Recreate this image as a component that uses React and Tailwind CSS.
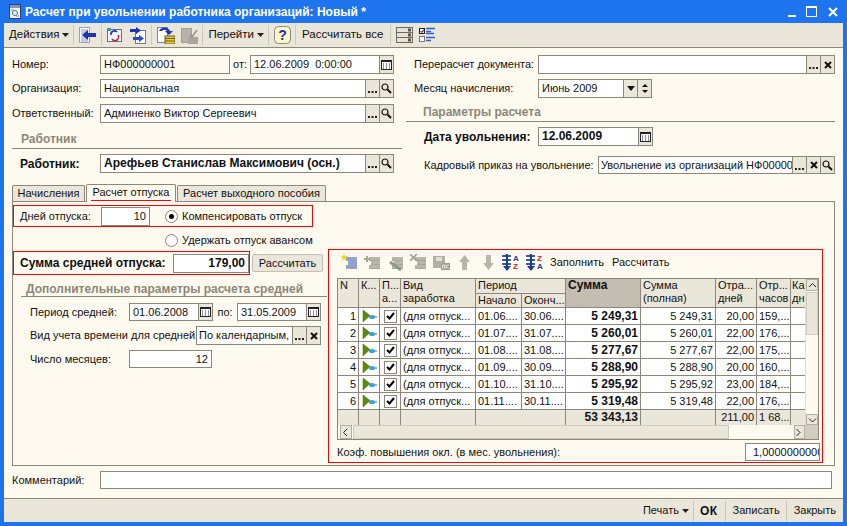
const line = 'border-[#8c8779]';
const btnBg = 'bg-[#ebe6da]';

function Sep() {
  return <div className="w-px h-[20px] bg-[#cfc9bb] ml-[4px] mr-[5px]" />;
}

function Caret() {
  return (
    <svg width="7" height="4" viewBox="0 0 7 4" className="ml-[3px]">
      <polygon points="0,0 7,0 3.5,4" fill="#222" />
    </svg>
  );
}

function Dots() {
  return (
    <svg width="9" height="2" viewBox="0 0 9 2" className="mt-[7px]">
      <rect x="0" width="2" height="2" fill="#222" />
      <rect x="3.5" width="2" height="2" fill="#222" />
      <rect x="7" width="2" height="2" fill="#222" />
    </svg>
  );
}

function Lens() {
  return (
    <svg width="11" height="11" viewBox="0 0 11 11" fill="none" stroke="#111">
      <circle cx="4" cy="4" r="3" strokeWidth="1.2" />
      <path d="M6.5 6.5 L10 10" strokeWidth="2" />
    </svg>
  );
}

function Cross() {
  return (
    <svg width="8" height="8" viewBox="0 0 8 8" stroke="#111" strokeWidth="2">
      <path d="M1 1 L7 7 M7 1 L1 7" />
    </svg>
  );
}

function Calendar() {
  return (
    <svg width="11" height="10" viewBox="0 0 11 10">
      <rect x="0.5" y="0.5" width="10" height="9" fill="#fff" stroke="#222" />
      <rect x="0" y="0" width="11" height="2" fill="#222" />
      <path d="M2 4h1M5 4h1M8 4h1M2 6h1M5 6h1M8 6h1M2 8h1M5 8h1M8 8h1" stroke="#222" />
    </svg>
  );
}

const glyphs = { dots: Dots, lens: Lens, cross: Cross, cal: Calendar };

function Field({ w, value, bold, right, buttons = [], bg = 'bg-white', pad = 'px-[3px]' }) {
  return (
    <div className={`flex h-full border ${line} ${bg} ${w}`}>
      <div
        className={`flex-1 min-w-0 overflow-hidden whitespace-pre leading-[17px] ${pad} ${bold ? 'font-bold text-[12px]' : ''} ${right ? 'text-right' : ''}`}
      >
        {value}
      </div>
      {buttons.map((b, i) => {
        const G = glyphs[b];
        return (
          <div key={i} className={`w-[14px] shrink-0 flex items-center justify-center border-l ${line} ${btnBg}`}>
            <G />
          </div>
        );
      })}
    </div>
  );
}

function Heading({ children, className }) {
  return (
    <div className={`border-b ${line} font-bold text-[12px] text-[#8c8779] ${className}`}>{children}</div>
  );
}

function ListIcon({ color = '#8d9fd6', mark }) {
  return (
    <svg width="17" height="17" viewBox="0 0 17 17">
      <rect x="5" y="3" width="11" height="3" fill={color} />
      <rect x="7" y="7" width="9" height="3" fill={color} />
      <rect x="5" y="11" width="11" height="3" fill={color} />
      <path d="M5 14.5h11M7 10.5h9M5 6.5h11" stroke="#6f6f6f" strokeOpacity="0.6" />
      {mark}
    </svg>
  );
}

function TableTools() {
  return (
    <div className="flex items-center h-[18px] mt-[3px] ml-[12px]">
      <ListIcon mark={<polygon points="3,0 4,2 6.5,2 4.5,4 5.5,7 3,5 0.5,7 1.5,4 0,2 2,2" fill="#f7d300" />} />
      <div className="w-[6px]" />
      <ListIcon color="#b9b5aa" mark={<path d="M0 5h6M3 2v6" stroke="#a2b08f" strokeWidth="2" />} />
      <div className="w-[6px]" />
      <ListIcon color="#b9b5aa" mark={<path d="M3 8 L14 16" stroke="#8f9a84" strokeWidth="3" />} />
      <div className="w-[6px]" />
      <ListIcon color="#b9b5aa" mark={<path d="M0 0 L7 7 M7 0 L0 7" stroke="#a09c92" strokeWidth="1.6" />} />
      <div className="w-[6px]" />
      <svg width="17" height="17" viewBox="0 0 17 17">
        <rect x="0" y="2" width="12" height="12" fill="#b3afa5" />
        <rect x="3" y="3" width="6" height="4" fill="#e0ddd5" />
        <rect x="8" y="9" width="9" height="7" fill="#a19d93" />
        <path d="M9.5 11h2v3h-2zM13 10.5v4M16 10.5l-3 2 3 2" stroke="#e0ddd5" fill="none" />
      </svg>
      <div className="w-[8px]" />
      <svg width="13" height="17" viewBox="0 0 13 17">
        <polygon points="6.5,1 12,8 9,8 9,16 4,16 4,8 1,8" fill="#b9b5aa" />
      </svg>
      <div className="w-[11px]" />
      <svg width="13" height="17" viewBox="0 0 13 17">
        <polygon points="6.5,16 12,9 9,9 9,1 4,1 4,9 1,9" fill="#b9b5aa" />
      </svg>
      <div className="w-[7px]" />
      <SortIcon top="A" bottom="Z" />
      <div className="w-[7px]" />
      <SortIcon top="Z" bottom="A" />
      <span className="ml-[7px]">Заполнить</span>
      <span className="ml-[8px]">Рассчитать</span>
    </div>
  );
}

function SortIcon({ top, bottom }) {
  return (
    <svg width="17" height="18" viewBox="0 0 17 18">
      <path d="M0 3h9M0 7h9M0 11h9" stroke="#3557b0" strokeWidth="2" />
      <path d="M5 1v14" stroke="#1f3c92" strokeWidth="2" />
      <polygon points="1,13 9,13 5,18" fill="#1f3c92" />
      <text x="11" y="7.5" fontSize="8" fontWeight="700" fontFamily="Liberation Sans, sans-serif" fill={top === 'A' ? '#1f3c92' : '#d11a1a'}>{top}</text>
      <text x="11" y="16" fontSize="8" fontWeight="700" fontFamily="Liberation Sans, sans-serif" fill={bottom === 'A' ? '#1f3c92' : '#d11a1a'}>{bottom}</text>
    </svg>
  );
}

const rows = [
  ['1', '01.06....', '30.06....', '5 249,31', '20,00', '159,...'],
  ['2', '01.07....', '31.07....', '5 260,01', '22,00', '176,...'],
  ['3', '01.08....', '31.08....', '5 277,67', '22,00', '175,...'],
  ['4', '01.09....', '30.09....', '5 288,90', '20,00', '160,...'],
  ['5', '01.10....', '31.10....', '5 295,92', '23,00', '184,...'],
  ['6', '01.11....', '30.11....', '5 319,48', '22,00', '176,...'],
];

const cell = `border-r border-b ${line} overflow-hidden whitespace-nowrap px-[2px] leading-[16px]`;
const head = `border-r border-b ${line} ${btnBg} overflow-hidden whitespace-nowrap px-[2px] leading-[13px]`;

function RowMark() {
  return (
    <svg width="15" height="13" viewBox="0 0 15 13">
      <polygon points="1,0 8,5.5 1,12" fill="#5d8a0c" stroke="#3f6a05" strokeWidth="0.5" />
      <path d="M7 7h8" stroke="#2f6fa8" strokeWidth="1" />
      <ellipse cx="10" cy="7" rx="3" ry="2" fill="#37a3dc" />
    </svg>
  );
}

function Check() {
  return (
    <div className={`w-[13px] h-[13px] border ${line} bg-white flex items-center justify-center`}>
      <svg width="9" height="8" viewBox="0 0 9 8" fill="none" stroke="#000" strokeWidth="2">
        <path d="M1 4 L3.5 6.5 L8 1" />
      </svg>
    </div>
  );
}

function Chevron({ dir }) {
  const d = { up: 'M1 5 L4.5 1.5 L8 5', down: 'M1 1.5 L4.5 5 L8 1.5', left: 'M5 1 L1.5 4.5 L5 8', right: 'M1.5 1 L5 4.5 L1.5 8' }[dir];
  return (
    <svg width="9" height="9" viewBox="0 0 9 9" fill="none" stroke="#222" className={dir === 'up' || dir === 'down' ? 'mt-[2px]' : ''}>
      <path d={d} />
    </svg>
  );
}

function Table() {
  return (
    <div className={`border ${line} w-[482px] h-[162px] mt-[7px] ml-[8px] flex flex-col bg-white`}>
      <div className="flex flex-1 min-h-0">
        <div className="w-[467px] grid grid-cols-[21px_21px_21px_75px_46px_44px_75px_75px_41px_34px_14px] grid-rows-[15px_14px_repeat(6,17px)_15px]">
          <div className={`${head} row-span-2`}>N</div>
          <div className={`${head} row-span-2`}>К...</div>
          <div className={`${head} row-span-2`}>П...<br />а...</div>
          <div className={`${head} row-span-2`}>Вид<br />заработка</div>
          <div className={`${head} col-span-2`}>Период</div>
          <div className={`${head} row-span-2 !bg-[#c4bdb1] font-bold text-[12px]`}>Сумма</div>
          <div className={`${head} row-span-2`}>Сумма<br />(полная)</div>
          <div className={`${head} row-span-2`}>Отра...<br />дней</div>
          <div className={`${head} row-span-2`}>Отр...<br />часов</div>
          <div className={`${head} row-span-2 !border-r-0 !px-[1px]`}>Ка<br />дн</div>
          <div className={head}>Начало</div>
          <div className={head}>Оконч...</div>
          {rows.map((r) => (
            <div key={r[0]} className="contents">
              <div className={`${cell} text-right`}>{r[0]}</div>
              <div className={`${cell} flex items-center justify-center`}><RowMark /></div>
              <div className={`${cell} flex items-center justify-center`}><Check /></div>
              <div className={cell}>(для отпуск...</div>
              <div className={cell}>{r[1]}</div>
              <div className={cell}>{r[2]}</div>
              <div className={`${cell} text-right font-bold text-[12px]`}>{r[3]}</div>
              <div className={`${cell} text-right`}>{r[3]}</div>
              <div className={`${cell} text-right`}>{r[4]}</div>
              <div className={cell}>{r[5]}</div>
              <div className={`border-b ${line}`} />
            </div>
          ))}
          {['', '', '', '', '', '', '53 343,13', '', '211,00', '1 68...'].map((t, i) => (
            <div
              key={i}
              className={`${btnBg} border-r ${line} overflow-hidden whitespace-nowrap px-[2px] leading-[14px] ${i === 4 ? 'col-span-2' : ''} ${i === 6 ? 'text-right font-bold text-[12px]' : ''} ${i === 8 ? 'text-right' : ''}`}
              style={i === 5 ? { display: 'none' } : undefined}
            >
              {t}
            </div>
          ))}
          <div className={btnBg} />
        </div>
        <div className="flex-1 flex flex-col bg-[#fffaf0] border-l border-[#e4dfd3]">
          <div className={`h-[12px] flex justify-center ${btnBg} border border-[#b4afa2]`}><Chevron dir="up" /></div>
          <div className="h-[43px] mt-px bg-[#ebe6da] border border-[#cfcabd]" />
          <div className="flex-1" />
          <div className={`h-[11px] flex justify-center ${btnBg} border border-[#b4afa2]`}><Chevron dir="down" /></div>
        </div>
      </div>
      <div className="h-[14px] flex shrink-0 bg-[#fffaf0]">
        <div className={`w-[12px] ml-[2px] flex items-center justify-center ${btnBg} border border-[#b4afa2]`}><Chevron dir="left" /></div>
        <div className="w-[376px] ml-px bg-[#ebe6da] border border-[#cfcabd]" />
        <div className="flex-1" />
        <div className={`w-[11px] flex items-center justify-center ${btnBg} border border-[#b4afa2]`}><Chevron dir="right" /></div>
        <div className="w-[13px] bg-[#d3cdc1]" />
      </div>
    </div>
  );
}

function Radio({ on }) {
  return (
    <div className={`w-[13px] h-[13px] rounded-full border ${line} bg-white flex items-center justify-center mr-[4px]`}>
      {on && <div className="w-[5px] h-[5px] rounded-full bg-black" />}
    </div>
  );
}

function WindowIcon() {
  return (
    <svg width="12" height="15" viewBox="0 0 12 15">
      <rect x="0.5" y="0.5" width="11" height="14" fill="#eef3fb" stroke="#32406b" />
      <rect x="1" y="1" width="10" height="3" fill="#8a94ad" />
      <circle cx="6" cy="9" r="2.5" fill="none" stroke="#3f7f8f" />
      <path d="M2 6h3M7 12h3" stroke="#7d8aa8" />
    </svg>
  );
}

function ToolbarIcons() {
  return {
    back: (
      <svg width="18" height="17" viewBox="0 0 18 17">
        <rect x="0.5" y="0.5" width="10" height="15" fill="#fff" stroke="#9aa3bb" />
        <path d="M2 3h7M2 5h7M2 7h7M2 10h7M2 12h7M2 14h7" stroke="#7f9bd6" />
        <path d="M3 8 L9 3 V6 H17 V10 H9 V13 Z" fill="#1d33b8" />
      </svg>
    ),
    refresh: (
      <svg width="15" height="14" viewBox="0 0 15 14">
        <rect x="0.5" y="1.5" width="14" height="12" fill="#f2f5fb" stroke="#5c6f9c" />
        <rect x="0" y="0" width="4" height="3" fill="#2fa5a5" />
        <path d="M4 7 A3.5 3.5 0 0 1 10 4" stroke="#2537b8" strokeWidth="1.6" fill="none" />
        <path d="M11 7 A3.5 3.5 0 0 1 5 11" stroke="#c8232c" strokeWidth="1.6" fill="none" />
      </svg>
    ),
    exchange: (
      <svg width="17" height="17" viewBox="0 0 17 17">
        <rect x="5.5" y="3.5" width="10" height="13" fill="#fff" stroke="#6d7690" />
        <path d="M0 2 H6 V0 L11 3.5 L6 7 V5 H0 Z" fill="#1d33b8" />
        <path d="M3 10 H9 V8 L14 11.5 L9 15 V13 H3 Z" fill="#2c47c8" />
      </svg>
    ),
    lock: (
      <svg width="18" height="18" viewBox="0 0 18 18">
        <rect x="0.5" y="1.5" width="10" height="15" fill="#fff" stroke="#7d88a8" />
        <path d="M2 5 A6 6 0 0 1 13 5 H16 L12 9 L8 5 H10 A3 3 0 0 0 5 5 Z" fill="#1d33b8" />
        <rect x="8" y="10" width="10" height="8" fill="#e7c93c" stroke="#6c6020" />
        <path d="M8 12.5h10M8 15h10" stroke="#6c6020" />
      </svg>
    ),
    gray: (
      <svg width="17" height="17" viewBox="0 0 17 17">
        <rect x="0.5" y="1.5" width="10" height="14" fill="#b8b4aa" stroke="#a09c92" />
        <rect x="7" y="10" width="10" height="7" fill="#a9a59b" />
        <path d="M9 8 L11 10 L16 3" stroke="#98948a" strokeWidth="1.5" fill="none" />
      </svg>
    ),
    help: (
      <svg width="17" height="18" viewBox="0 0 17 18">
        <rect x="0.5" y="0.5" width="16" height="17" rx="4" fill="#fdf7c8" stroke="#8c8779" />
        <text x="8.5" y="14" textAnchor="middle" fontSize="14" fontWeight="700" fontFamily="Liberation Sans, sans-serif" fill="#1a2bb5">?</text>
      </svg>
    ),
    rows: (
      <svg width="17" height="16" viewBox="0 0 17 16">
        <rect x="0.5" y="0.5" width="16" height="15" fill="#e6e2d8" stroke="#6d6a62" />
        <path d="M0 5.5h17M0 10.5h17" stroke="#6d6a62" />
        <path d="M12 1.5h3v3h-3zM12 6.5h3v3h-3zM12 11.5h3v3h-3z" fill="#55524c" />
      </svg>
    ),
    tree: (
      <svg width="17" height="16" viewBox="0 0 17 16">
        <rect x="0.5" y="1.5" width="5" height="5" fill="#fff" stroke="#222" />
        <path d="M1.5 4 L3 5.5 L5 2.5" stroke="#000" fill="none" />
        <rect x="0.5" y="9.5" width="5" height="5" fill="#fff" stroke="#777" />
        <path d="M7 1.5h9M7 4.5h5M7 6.5h8M7 10.5h9M7 13.5h5" stroke="#2f62c9" strokeWidth="1.5" />
      </svg>
    ),
  };
}

export default function App() {
  const ic = ToolbarIcons();
  return (
    <div
      className="w-[847px] h-[526px] bg-[#1e73ee] flex flex-col overflow-hidden text-[11px] text-[#111] whitespace-nowrap"
      style={{ fontFamily: '"Liberation Sans", Arial, sans-serif' }}
    >
      {/* Title bar */}
      <div className="h-[23px] shrink-0 flex items-center text-white pl-[9px]">
        <WindowIcon />
        <span className="ml-[4px] font-bold text-[12px] whitespace-nowrap">
          Расчет при увольнении работника организаций: Новый *
        </span>
        <div className="flex-1" />
        <div className="flex items-center mr-[9px]">
          <div className="w-[8px] h-[2px] bg-white mt-[8px]" />
          <div className="w-[11px] h-[11px] border border-white border-t-2 ml-[10px]" />
          <svg width="10" height="10" viewBox="0 0 10 10" stroke="#fff" strokeWidth="2" className="ml-[11px]">
            <path d="M1 1 L9 9 M9 1 L1 9" />
          </svg>
        </div>
      </div>

      <div className="flex-1 min-h-0 mx-[4px] mb-[4px] flex flex-col bg-[#fffaf0]">
        {/* Toolbar */}
        <div className={`h-[25px] shrink-0 flex items-center ${btnBg} border-b ${line} pl-[5px] text-[11.5px]`}>
          <span>Действия</span>
          <Caret />
          <Sep />
          {ic.back}
          <Sep />
          {ic.refresh}
          <div className="w-[8px]" />
          {ic.exchange}
          <Sep />
          {ic.lock}
          <div className="w-[6px]" />
          {ic.gray}
          <Sep />
          <span>Перейти</span>
          <Caret />
          <Sep />
          {ic.help}
          <Sep />
          <span className="ml-[1px]">Рассчитать все</span>
          <div className="w-[3px]" />
          <Sep />
          {ic.rows}
          <div className="w-[6px]" />
          {ic.tree}
        </div>

        {/* Header fields */}
        <div className="flex shrink-0">
          <div className="w-[390px] ml-[8px] pt-[7px]">
            <div className="flex items-center h-[19px]">
              <div className="w-[88px]">Номер:</div>
              <Field w="w-[130px]" value="НФ000000001" bg="bg-[#fffaf0]" />
              <div className="w-[20px] text-center">от:</div>
              <Field w="w-[144px]" value="12.06.2009  0:00:00" buttons={['cal']} />
            </div>
            <div className="flex items-center h-[19px] mt-[5px]">
              <div className="w-[88px]">Организация:</div>
              <Field w="w-[294px]" value="Национальная" buttons={['dots', 'lens']} />
            </div>
            <div className="flex items-center h-[19px] mt-[6px]">
              <div className="w-[88px]">Ответственный:</div>
              <Field w="w-[294px]" value="Админенко Виктор Сергеевич" buttons={['dots', 'lens']} />
            </div>
            <Heading className="h-[19px] mt-[7px] pl-[9px]">Работник</Heading>
            <div className="flex items-center h-[19px] mt-[5px]">
              <div className="w-[88px] pl-[8px] font-bold text-[12px]">Работник:</div>
              <Field w="w-[294px]" value="Арефьев Станислав Максимович (осн.)" bold buttons={['dots', 'lens']} />
            </div>
          </div>
          <div className="w-[429px] ml-[4px] pt-[7px]">
            <div className="flex items-center h-[19px]">
              <div className="w-[132px] pl-[8px]">Перерасчет документа:</div>
              <Field w="w-[297px]" value="" buttons={['dots', 'cross']} />
            </div>
            <div className="flex items-center h-[19px] mt-[5px]">
              <div className="w-[132px] pl-[8px]">Месяц начисления:</div>
              <div className={`flex h-full w-[114px] border ${line} bg-white`}>
                <div className="flex-1 px-[3px] leading-[17px]">Июнь 2009</div>
                <div className={`w-[14px] flex items-center justify-center border-l ${line} ${btnBg}`}>
                  <svg width="8" height="5" viewBox="0 0 8 5"><polygon points="0,0 8,0 4,5" fill="#111" /></svg>
                </div>
                <div className={`w-[14px] flex flex-col items-center justify-center gap-[3px] border-l ${line} ${btnBg}`}>
                  <svg width="6" height="3" viewBox="0 0 6 3"><polygon points="3,0 6,3 0,3" fill="#111" /></svg>
                  <svg width="6" height="3" viewBox="0 0 6 3"><polygon points="0,0 6,0 3,3" fill="#111" /></svg>
                </div>
              </div>
            </div>
            <Heading className="h-[19px] mt-[5px] pl-[17px]">Параметры расчета</Heading>
            <div className="flex items-center h-[19px] mt-[5px]">
              <div className="w-[132px] pl-[18px] font-bold text-[12px]">Дата увольнения:</div>
              <Field w="w-[115px]" value="12.06.2009" bold buttons={['cal']} />
            </div>
            <div className="flex items-center h-[18px] mt-[10px]">
              <div className="w-[192px] pl-[18px] whitespace-nowrap">Кадровый приказ на увольнение:</div>
              <Field
                w="w-[237px]"
                value="Увольнение из организаций НФ00000001"
                pad="px-[2px]"
                buttons={['dots', 'cross', 'lens']}
              />
            </div>
          </div>
        </div>

        {/* Tabs */}
        <div className="flex items-end ml-[8px] mt-[10px] h-[17px] shrink-0">
          <div className={`w-[73px] h-[16px] ${btnBg} border border-b-0 ${line} rounded-t-[2px] text-center leading-[15px]`}>Начисления</div>
          <div className={`w-[90px] h-[18px] -mb-px ml-px bg-[#fffaf0] border border-b-0 ${line} rounded-t-[2px] z-10 text-center leading-[15px]`}>
            <span className="inline-block border-b border-[#ff0000] px-[2px]">Расчет отпуска</span>
          </div>
          <div className={`w-[149px] h-[16px] ml-px ${btnBg} border border-b-0 ${line} rounded-t-[2px] text-center leading-[15px]`}>Расчет выходного пособия</div>
        </div>

        {/* Tab panel */}
        <div className={`ml-[8px] w-[823px] h-[265px] shrink-0 border ${line}`}>
          <div className="mt-[3px] w-[300px] h-[22px] border border-[#ff0000] flex items-center pl-[6px]">
            <div className="w-[81px]">Дней отпуска:</div>
            <Field w="w-[49px] !h-[19px]" value="10" right />
            <div className="w-[15px]" />
            <Radio on />
            <span>Компенсировать отпуск</span>
          </div>
          <div className="h-[18px] mt-[4px] pl-[152px] flex items-center pt-[1px]">
            <Radio />
            <span>Удержать отпуск авансом</span>
          </div>
          <div className="flex">
            <div className="w-[315px] pt-[2px]">
              <div className="flex items-start">
                <div className="w-[237px] h-[24px] border border-[#ff0000] flex items-center pl-[6px]">
                  <div className="w-[153px] font-bold text-[12px] whitespace-nowrap">Сумма средней отпуска:</div>
                  <Field w="w-[76px] !h-[19px]" value="179,00" bold right />
                </div>
                <div className="w-[71px] h-[18px] mt-[3px] ml-[2px] bg-[#ebe6da] border border-[#c4bfb2] rounded-[2px] text-center leading-[16px]">
                  Рассчитать
                </div>
              </div>
              <Heading className="h-[17px] mt-[5px] ml-[8px] w-[306px] pl-[5px] whitespace-nowrap">
                Дополнительные параметры расчета средней
              </Heading>
              <div className="ml-[17px]">
                <div className="flex items-center h-[18px] mt-[6px]">
                  <div className="w-[99px]">Период средней:</div>
                  <Field w="w-[84px]" value="01.06.2008" buttons={['cal']} />
                  <div className="w-[24px] text-center">по:</div>
                  <Field w="w-[84px]" value="31.05.2009" buttons={['cal']} />
                </div>
                <div className="flex items-center h-[19px] mt-[5px]">
                  <div className="w-[166px] whitespace-nowrap">Вид учета времени для средней:</div>
                  <Field w="w-[125px]" value="По календарным," pad="px-[2px]" buttons={['dots', 'cross']} />
                </div>
                <div className="flex items-center h-[18px] mt-[5px]">
                  <div className="w-[99px]">Число месяцев:</div>
                  <Field w="w-[83px]" value="12" right />
                </div>
              </div>
            </div>
            <div className="w-[495px] h-[214px] border border-[#ff0000]">
              <TableTools />
              <Table />
              <div className="flex items-center h-[18px] mt-[3px] ml-[8px] w-[483px] justify-between">
                <span>Коэф. повышения окл. (в мес. увольнения):</span>
                <Field w="w-[75px]" value="1,0000000000" pad="pl-[7px]" />
              </div>
            </div>
          </div>
        </div>

        {/* Comment */}
        <div className="flex items-center h-[18px] mt-[5px] ml-[8px] shrink-0">
          <div className="w-[88px]">Комментарий:</div>
          <Field w="w-[732px]" value="" />
        </div>

        <div className="flex-1" />

        {/* Bottom bar */}
        <div className={`h-[24px] shrink-0 flex items-center justify-end ${btnBg} border-t ${line} pr-[5px]`}>
          <span>Печать</span>
          <Caret />
          <Sep />
          <span className="font-bold text-[12px] ml-px mr-[3px] tracking-[0.5px]">ОК</span>
          <Sep />
          <span className="mx-[2px]">Записать</span>
          <Sep />
          <span className="mx-[2px]">Закрыть</span>
        </div>
      </div>
    </div>
  );
}
